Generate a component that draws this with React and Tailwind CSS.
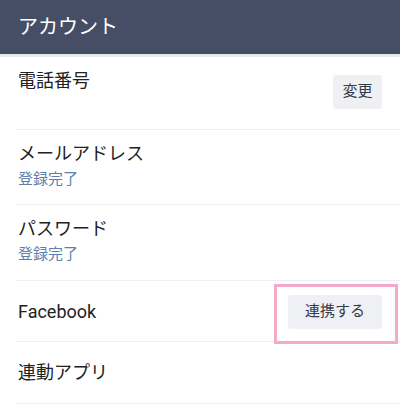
import React from 'react';

const font = { fontFamily: '"Roboto", "Noto Sans CJK JP", sans-serif' };

function Row({ title, sub, height, children }) {
  return (
    <div className={`flex border-b border-[#eeeff2] pr-[18px] ${height}`}>
      <div className="flex-1 pt-[13px] pl-[2px]">
        <div className="text-[18px] leading-[22px] text-[#222]">{title}</div>
        {sub && <div className="mt-[2px] text-[15px] leading-[24px] text-[#5d7fae]">{sub}</div>}
      </div>
      {children}
    </div>
  );
}

export default function App() {
  return (
    <div className="w-[400px] h-[408px] bg-white overflow-hidden" style={font}>
      <div className="h-[54px] bg-[#464e66] flex items-center pl-[18px]">
        <span className="text-[20px] text-white">アカウント</span>
      </div>
      <div className="h-[3px] bg-[#e7e9ee]" />

      <div className="ml-4">
        <Row title="電話番号" height="h-[73px]">
          <div className="flex items-center pb-[4px]">
            <button className="h-[33px] w-[49px] rounded-[3px] bg-[#eef0f4] text-[15px] text-[#333a48] shadow-[0_1px_1px_rgba(0,0,0,0.06)]">
              変更
            </button>
          </div>
        </Row>
        <Row title="メールアドレス" sub="登録完了" height="h-[75px]" />
        <Row title="パスワード" sub="登録完了" height="h-[76px]" />

        <div className="flex h-[61px] items-center border-b border-[#eeeff2] pr-[18px]">
          <div className="flex-1 pl-[2px] text-[18px] text-[#222]">Facebook</div>
          <div className="relative">
            <button className="h-[33px] w-[94px] rounded-[3px] bg-[#eef0f4] text-[15px] text-[#333a48] shadow-[0_1px_1px_rgba(0,0,0,0.06)]">
              連携する
            </button>
            <div className="pointer-events-none absolute -left-[14px] -right-[16px] -top-[11px] -bottom-[16px] border-[3px] border-[#f2aac8]" />
          </div>
        </div>

        <div className="flex h-[62px] items-center border-b border-[#eeeff2]">
          <div className="pl-[2px] text-[18px] text-[#222]">連動アプリ</div>
        </div>
      </div>
    </div>
  );
}
